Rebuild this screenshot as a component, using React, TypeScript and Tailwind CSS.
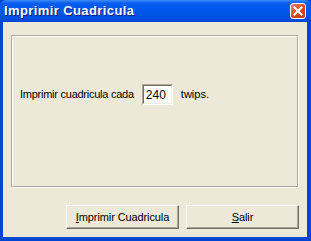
import React from 'react';

const font = { fontFamily: '"Liberation Sans", Arial, sans-serif' };

function ClassicButton({ hot, rest }: { hot: string; rest: string }) {
  return (
    <button
      className="w-[113px] h-[24px] bg-[#ece9d8] border border-t-white border-l-white border-r-[#716f64] border-b-[#716f64] text-[11px] text-black shadow-[inset_-1px_-1px_0_#aca899] flex items-center justify-center tracking-[-0.1px]"
    >
      <span>
        <span className="underline">{hot}</span>
        {rest}
      </span>
    </button>
  );
}

export default function App() {
  return (
    <div className="w-[311px] h-[241px] flex flex-col bg-[#0046d5] select-none" style={font}>
      {/* Title bar */}
      <div className="h-[22px] flex items-center justify-between pl-[4px] pr-[5px] bg-[linear-gradient(to_bottom,#3c8cf8_0px,#0a5ff0_3px,#0058ee_8px,#0054e3_16px,#0046d5_22px)] rounded-t-[6px]">
        <span className="text-white font-bold text-[13px] tracking-[0.4px] [text-shadow:1px_1px_0_#0a1e7e]">
          Imprimir Cuadricula
        </span>
        <div className="w-[16px] h-[16px] rounded-[3px] border border-white bg-[linear-gradient(135deg,#e9866a,#d7461d_55%,#c13b14)] flex items-center justify-center">
          <svg width="10" height="10" viewBox="0 0 10 10">
            <path d="M1.5 1.5 L8.5 8.5 M8.5 1.5 L1.5 8.5" stroke="white" strokeWidth="2" strokeLinecap="square" />
          </svg>
        </div>
      </div>

      {/* Client area */}
      <div className="flex-1 ml-[3px] mr-[4px] mb-[4px] bg-[#ece9d8] flex flex-col px-[8px]">
        {/* Group box */}
        <div className="mt-[13px] h-[153px] border border-t-[#aca899] border-l-[#aca899] border-r-white border-b-white">
          <div className="h-full border border-t-white border-l-white border-r-[#aca899] border-b-[#aca899] pt-[47px] pl-[7px]">
            <div className="flex items-center h-[21px] text-[11px] text-black">
              <span className="tracking-[-0.25px]">Imprimir cuadricula cada</span>
              <div className="ml-[8px] w-[31px] h-[21px] bg-white border border-t-[#aca899] border-l-[#aca899] border-r-white border-b-white">
                <div className="h-full border border-t-[#716f64] border-l-[#716f64] border-r-[#f1efe2] border-b-[#f1efe2] flex items-center pl-[2px] text-[12px]">
                  240
                </div>
              </div>
              <span className="ml-[8px]">twips.</span>
            </div>
          </div>
        </div>

        {/* Buttons */}
        <div className="mt-[17px] flex justify-end gap-[7px]">
          <ClassicButton hot="I" rest="mprimir Cuadricula" />
          <ClassicButton hot="S" rest="alir" />
        </div>
      </div>
    </div>
  );
}
